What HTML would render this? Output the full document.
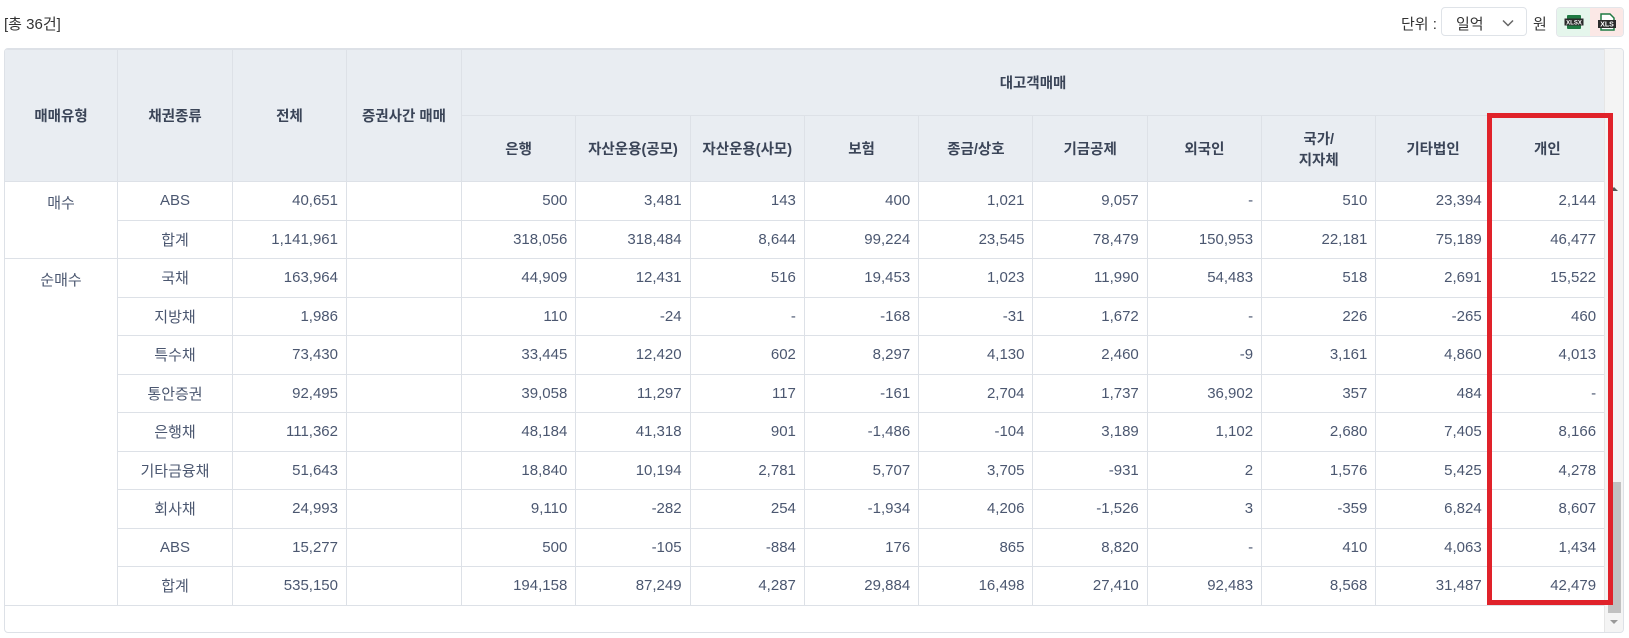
<!DOCTYPE html>
<html><head><meta charset="utf-8">
<style>
body{margin:0;width:1629px;height:638px;background:#fff;font-family:"Liberation Sans","Noto Sans CJK KR",sans-serif;color:#4b5770;position:relative;overflow:hidden}
.total{position:absolute;left:4px;top:13px;font-size:15px;color:#333}
.unit{position:absolute;left:1401px;top:13px;font-size:15px;color:#333}
.sel{position:absolute;left:1441px;top:7px;width:86px;height:29px;border:1px solid #dfe3e8;border-radius:4px;box-sizing:border-box;font-size:15px;color:#333;padding:5px 0 0 14px}
.sel svg{position:absolute;right:12px;top:11px}
.won{position:absolute;left:1533px;top:13px;font-size:15px;color:#333}
.ic{position:absolute;left:1556px;top:7px;width:68px;height:30px;border:1px solid #e3e6ea;border-radius:4px;box-sizing:border-box;overflow:hidden;display:flex}
.ic div{width:50%;height:100%;display:flex;align-items:center;justify-content:center}
.wrap{position:absolute;left:4px;top:48px;width:1620px;height:585px;border:1px solid #dde1e7;border-radius:4px;box-sizing:border-box;overflow:hidden}
table{border-collapse:collapse;table-layout:fixed;width:1600px;position:absolute;left:-1px;top:0}
th,td{border:1px solid #dde1e7;font-size:15px;padding:0 8px;white-space:nowrap}
th{background:#e9edf2;color:#3b4558;font-weight:bold;height:65px;font-size:14.5px}
td{height:37.5px;text-align:right}
td.c{text-align:center}
td.g{text-align:center;vertical-align:top;padding-top:10px}
.sb{position:absolute;right:0;top:0;width:18px;height:583px;background:#f4f4f4;border-left:1px solid #e6e6e6}
.thumb{position:absolute;left:3px;top:433px;width:13px;height:131px;background:#c1c1c1}
.red{position:absolute;left:1487px;top:113px;width:126px;height:492px;border:5px solid #e0222a;box-sizing:border-box}
</style></head><body>
<div class="total">[총 36건]</div>
<div class="unit">단위 :</div>
<div class="sel">일억<svg width="12" height="8" viewBox="0 0 12 8"><path d="M1 1.5L6 6.5L11 1.5" fill="none" stroke="#666" stroke-width="1.5"/></svg></div>
<div class="won">원</div>
<div class="ic"><div style="background:#e5f6ec"><svg width="20" height="16" viewBox="0 0 20 16"><rect x="3" y="1" width="14" height="14" rx="1" fill="#1f7a43"/><rect x="0.5" y="4.5" width="19" height="7" fill="#2b2b2b"/><text x="10" y="10.5" font-size="6" fill="#fff" text-anchor="middle" font-family="Liberation Sans" font-weight="bold">XLSX</text></svg></div><div style="background:#fbe8e6"><svg width="20" height="18" viewBox="0 0 20 18"><path d="M4 1h9l4 4v12H4z" fill="#fff" stroke="#1f7a43" stroke-width="1.5"/><rect x="1" y="7" width="18" height="8" fill="#2b2b2b"/><text x="10" y="13.5" font-size="7" fill="#fff" text-anchor="middle" font-family="Liberation Sans" font-weight="bold">XLS</text></svg></div></div>
<div class="wrap">
<table>
<colgroup><col style="width:113px"><col style="width:115px"><col style="width:114px"><col style="width:115px"><col span="10" style="width:114.3px"></colgroup>
<tr><th rowspan="2">매매유형</th><th rowspan="2">채권종류</th><th rowspan="2">전체</th><th rowspan="2">증권사간 매매</th><th colspan="10">대고객매매</th></tr>
<tr><th>은행</th><th>자산운용(공모)</th><th>자산운용(사모)</th><th>보험</th><th>종금/상호</th><th>기금공제</th><th>외국인</th><th>국가/<br>지자체</th><th>기타법인</th><th>개인</th></tr>
<tr><td class="g" rowspan="2">매수</td><td class="c">ABS</td><td>40,651</td><td></td><td>500</td><td>3,481</td><td>143</td><td>400</td><td>1,021</td><td>9,057</td><td>-</td><td>510</td><td>23,394</td><td>2,144</td></tr>
<tr><td class="c">합계</td><td>1,141,961</td><td></td><td>318,056</td><td>318,484</td><td>8,644</td><td>99,224</td><td>23,545</td><td>78,479</td><td>150,953</td><td>22,181</td><td>75,189</td><td>46,477</td></tr>
<tr><td class="g" rowspan="9">순매수</td><td class="c">국채</td><td>163,964</td><td></td><td>44,909</td><td>12,431</td><td>516</td><td>19,453</td><td>1,023</td><td>11,990</td><td>54,483</td><td>518</td><td>2,691</td><td>15,522</td></tr>
<tr><td class="c">지방채</td><td>1,986</td><td></td><td>110</td><td>-24</td><td>-</td><td>-168</td><td>-31</td><td>1,672</td><td>-</td><td>226</td><td>-265</td><td>460</td></tr>
<tr><td class="c">특수채</td><td>73,430</td><td></td><td>33,445</td><td>12,420</td><td>602</td><td>8,297</td><td>4,130</td><td>2,460</td><td>-9</td><td>3,161</td><td>4,860</td><td>4,013</td></tr>
<tr><td class="c">통안증권</td><td>92,495</td><td></td><td>39,058</td><td>11,297</td><td>117</td><td>-161</td><td>2,704</td><td>1,737</td><td>36,902</td><td>357</td><td>484</td><td>-</td></tr>
<tr><td class="c">은행채</td><td>111,362</td><td></td><td>48,184</td><td>41,318</td><td>901</td><td>-1,486</td><td>-104</td><td>3,189</td><td>1,102</td><td>2,680</td><td>7,405</td><td>8,166</td></tr>
<tr><td class="c">기타금융채</td><td>51,643</td><td></td><td>18,840</td><td>10,194</td><td>2,781</td><td>5,707</td><td>3,705</td><td>-931</td><td>2</td><td>1,576</td><td>5,425</td><td>4,278</td></tr>
<tr><td class="c">회사채</td><td>24,993</td><td></td><td>9,110</td><td>-282</td><td>254</td><td>-1,934</td><td>4,206</td><td>-1,526</td><td>3</td><td>-359</td><td>6,824</td><td>8,607</td></tr>
<tr><td class="c">ABS</td><td>15,277</td><td></td><td>500</td><td>-105</td><td>-884</td><td>176</td><td>865</td><td>8,820</td><td>-</td><td>410</td><td>4,063</td><td>1,434</td></tr>
<tr><td class="c">합계</td><td>535,150</td><td></td><td>194,158</td><td>87,249</td><td>4,287</td><td>29,884</td><td>16,498</td><td>27,410</td><td>92,483</td><td>8,568</td><td>31,487</td><td>42,479</td></tr>
</table>
<div class="sb"><div style="position:absolute;left:5px;top:138px;width:0;height:0;border-left:4px solid transparent;border-right:4px solid transparent;border-bottom:4px solid #555"></div><div class="thumb"></div><div style="position:absolute;left:5px;top:571px;width:0;height:0;border-left:4px solid transparent;border-right:4px solid transparent;border-top:4px solid #999"></div></div>
</div>
<div class="red"></div>
</body></html>
